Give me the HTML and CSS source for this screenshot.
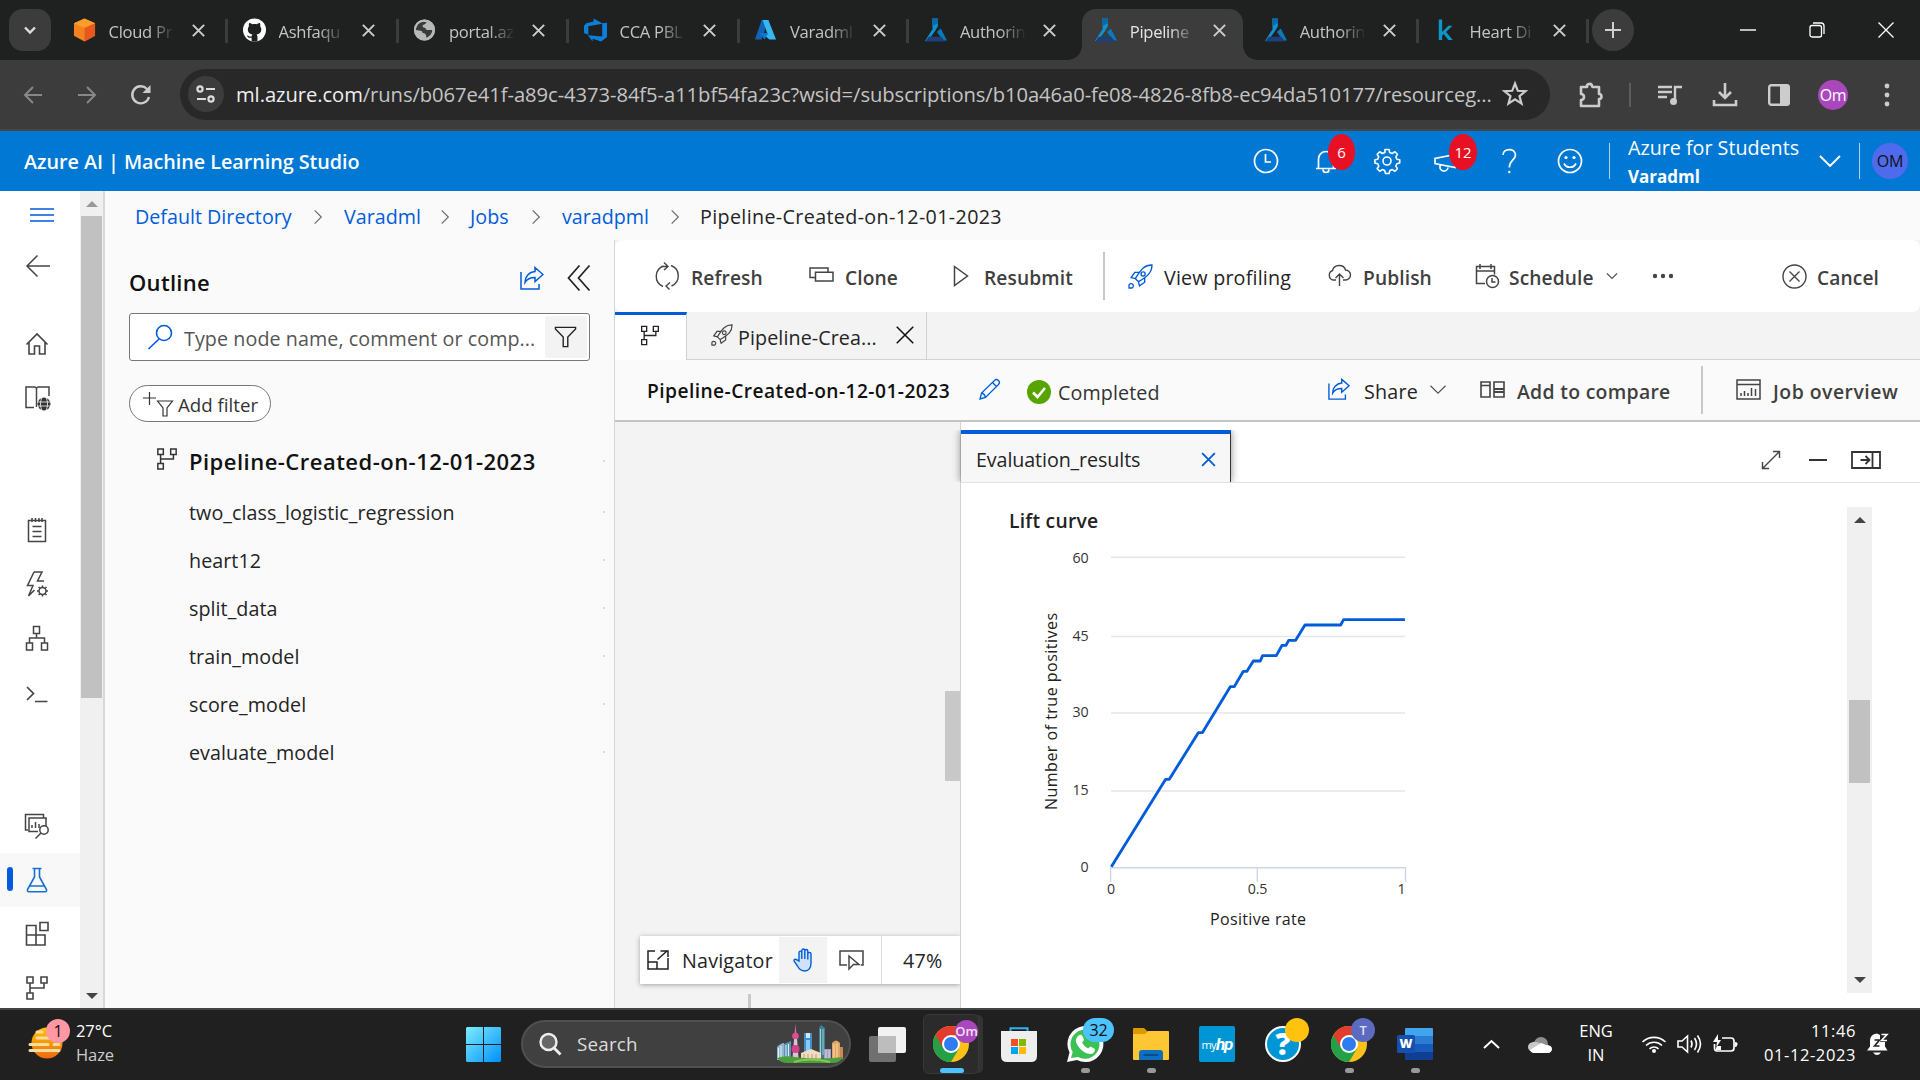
FILE: index.html
```html
<!DOCTYPE html>
<html lang="en">
<head>
<meta charset="utf-8">
<title>Pipeline-Created-on-12-01-2023 - Azure AI | Machine Learning Studio</title>
<link rel="stylesheet" href="styles.css">
</head>
<body>
<svg class="defs" aria-hidden="true">
  <defs>
    <symbol id="flaskfav" viewBox="0 0 24 24"><path d="M8.500 0h6v8l-3 5-7.500 10.500H1L9 11z" fill="#1191d0"/><path d="M8.500 0h6v5l-6 3z" fill="#0a6aa8"/><path d="M13.500 14l4-3.500L24 23l-4 0z" fill="#0b78bb"/><path d="M5 19h13l4 5H1.500z" fill="#1d3f7a"/></symbol>
    <symbol id="x" viewBox="0 0 24 24"><path d="M3 3l18 18M21 3L3 21" stroke="currentColor" fill="none"/></symbol>
    <symbol id="chevR" viewBox="0 0 12 20"><path d="M2 2l8 8-8 8" stroke="currentColor" fill="none" stroke-width="1.300"/></symbol>
    <symbol id="chevD" viewBox="0 0 24 14"><path d="M2 2l10 10L22 2" stroke="currentColor" fill="none"/></symbol>
    <symbol id="pipe" viewBox="0 0 24 24"><g stroke="currentColor" fill="none" stroke-width="1.600"><path d="M2 1h6v6H2zM16 1h6v6h-6zM2 17h6v6H2zM5 7v10M5 12h14V7"/></g></symbol>
    <symbol id="share" viewBox="0 0 24 24"><g stroke="currentColor" fill="none" stroke-width="1.500"><path d="M1 6v17h18v-5M15 1.500l8 7-8 7v-4c-5 0-8 1.500-10 5 0-6 4-10.500 10-11z"/></g></symbol>
    <symbol id="funnel" viewBox="0 0 24 24"><path d="M1 1.500h22v1.800L14.500 12v10.500h-5V12L1 3.300z" stroke="currentColor" fill="none" stroke-width="1.500"/></symbol>
    <symbol id="rocket" viewBox="0 0 24 24"><g stroke="currentColor" fill="none" stroke-width="1.300"><path d="M23 1c-7 0-10 3-16 13l3 3C19 12 23 8 23 1zM10.500 8H6.500l-3.500 5 4 1M16 13.500V17.500l-5 3.500-1-4"/><circle cx="14.500" cy="9.500" r="2"/><path d="M1 23v-3a2.200 2.200 0 1 1 3 3z"/></g></symbol>
    <symbol id="chrome" viewBox="0 0 36 36"><circle cx="18" cy="18" r="18" fill="#fbc116"/><path d="M2.400 9A18 18 0 0 0 18 36l8-13.500-8 3.500z" fill="#24a148"/><path d="M2.400 9l8 13.500L18 18z" fill="#24a148"/><path d="M18 9h15.600A18 18 0 0 0 2.400 9l7.600 13z" fill="#e33b2e"/><circle cx="18" cy="18" r="9" fill="#fff"/><circle cx="18" cy="18" r="7" fill="#2f7cf0"/></symbol>
  </defs>
</svg>

<header class="tabstrip">
  <div class="tabmenu"><svg width="12" height="9" viewBox="0 0 12 9"><path d="M1 1.500l5 5 5-5" stroke="#ddd" stroke-width="2.400" fill="none"/></svg></div>
  <nav class="tabs">
    <div class="tab"><svg class="fav" viewBox="0 0 24 24"><path d="M12 0l11 5v13l-11 6L1 18V5z" fill="#f58220"/><path d="M12 0l11 5-11 5L1 5z" fill="#fe9d2c"/><path d="M12 10l11-5v13l-11 6z" fill="#e8571b"/></svg><span>Cloud Pr</span><svg class="tx"><use href="#x"/></svg></div>
    <div class="tab"><svg class="fav" viewBox="0 0 24 24"><circle cx="12" cy="12" r="12" fill="#fff"/><path d="M9 24v-4c-3 .7-4-.5-5-2.200 1.800-.3 2 1.700 5 .9.100-1 .5-1.500 1-1.900-3-.4-5-2-5-5.300 0-1.300.4-2.500 1.200-3.400-.3-1-.2-2.200.2-3.300 1.300 0 2.500.7 3.400 1.300 1.500-.4 3-.4 4.500 0C15.200 5.500 16.500 4.800 17.700 4.800c.4 1.100.5 2.300.2 3.300.8.900 1.200 2.100 1.200 3.400 0 3.300-2 4.900-5 5.300.7.500 1 1.300 1 2.500V24z" fill="#1f2120"/></svg><span>Ashfaqu</span><svg class="tx"><use href="#x"/></svg></div>
    <div class="tab"><svg class="fav" viewBox="0 0 24 24"><circle cx="12" cy="12" r="11" fill="#b8b8b8"/><path d="M5 6c3-3 6-3 9-2-1 3-4 2-4 4s4 1 4 4h6c0 4-3 7-6 8 0-3-1-5-4-5 0-3-4-2-7-3 0-2 1-4 2-6z" fill="#3a3a3a"/><circle cx="12" cy="12" r="10" fill="none" stroke="#b8b8b8" stroke-width="2"/></svg><span>portal.az</span><svg class="tx"><use href="#x"/></svg></div>
    <div class="tab"><svg class="fav" viewBox="0 0 24 24"><path d="M24 4.500v14.700L18 24l-9-3v3l-5-6.500 15 1.200V5.500L4.500 8v9L0 15V7.500L2.500 5 10 3V0l9 5z" fill="#0a7fdc"/></svg><span>CCA PBL</span><svg class="tx"><use href="#x"/></svg></div>
    <div class="tab"><svg class="fav" viewBox="0 0 24 24"><path d="M8 1.500h7L8 22H1z" fill="#1263b8"/><path d="M9 1.500h6L23 22h-7L9 16h5z" fill="#35b8f1"/><path d="M6 15h9l-4 7z" fill="#0b78d4"/></svg><span>Varadml</span><svg class="tx"><use href="#x"/></svg></div>
    <div class="tab nosep"><svg class="fav"><use href="#flaskfav"/></svg><span>Authorin</span><svg class="tx"><use href="#x"/></svg></div>
    <div class="tab active"><svg class="fav"><use href="#flaskfav"/></svg><span>Pipeline</span><svg class="tx"><use href="#x"/></svg></div>
    <div class="tab"><svg class="fav"><use href="#flaskfav"/></svg><span>Authorin</span><svg class="tx"><use href="#x"/></svg></div>
    <div class="tab"><svg class="fav" viewBox="0 0 24 24"><path d="M5 1h3.500v13l6.500-6.500h4.300L12.600 14l7 8.500h-4.500L10 16.300 8.500 17.800v4.700H5z" fill="#0f96c8"/></svg><span>Heart Di</span><svg class="tx"><use href="#x"/></svg></div>
  </nav>
  <div class="newtab"><svg width="18" height="18" viewBox="0 0 18 18"><path d="M9 1v16M1 9h16" stroke="#d0d0d0" stroke-width="2"/></svg></div>
  <div class="winctl">
    <svg width="16" height="16" viewBox="0 0 16 16"><path d="M0 8h16" stroke="#fff" stroke-width="1.400"/></svg>
    <svg width="16" height="16" viewBox="0 0 16 16"><g fill="none" stroke="#fff" stroke-width="1.300"><rect x="1" y="3.500" width="11.500" height="11.500" rx="2"/><path d="M4 1h8q3 0 3 3v8"/></g></svg>
    <svg width="16" height="16" viewBox="0 0 16 16"><path d="M.5.5l15 15M15.500.5l-15 15" stroke="#fff" stroke-width="1.300"/></svg>
  </div>
</header>

<div class="urlbar">
  <svg class="c" width="20" height="20" viewBox="0 0 20 20"><path d="M19 10H2M10 2l-8 8 8 8" fill="none" stroke="#888" stroke-width="2"/></svg>
  <svg class="c" width="20" height="20" viewBox="0 0 20 20"><path d="M1 10h17M10 2l8 8-8 8" fill="none" stroke="#888" stroke-width="2"/></svg>
  <svg class="c" width="22" height="22" viewBox="0 0 22 22"><path d="M19 13a8.500 8.500 0 1 1-2-8l2 2" fill="none" stroke="#ccc" stroke-width="2.400"/><path d="M20.500 1v8h-8z" fill="#ccc"/></svg>
  <div class="omni">
    <div class="site"><svg width="20" height="18" viewBox="0 0 20 18"><g fill="none" stroke="#ddd" stroke-width="2.200"><circle cx="4" cy="4" r="2.600"/><circle cx="15" cy="14" r="2.600"/><path d="M10 4h9M1 14h9"/></g></svg></div>
    <span class="url"><b>ml.azure.com</b>/runs/b067e41f-a89c-4373-84f5-a11bf54fa23c?wsid=/subscriptions/b10a46a0-fe08-4826-8fb8-ec94da510177/resourceg...</span>
    <svg width="26" height="26" viewBox="0 0 26 26"><path d="M13 2.500l2.800 7.300 7.700.4-6 4.900 2 7.500L13 18.400l-6.500 4.200 2-7.500-6-4.900 7.700-.4z" fill="none" stroke="#ccc" stroke-width="2.200"/></svg>
  </div>
  <svg class="c" width="28" height="28" viewBox="0 0 28 28"><path d="M4 6h6a2.500 2.500 0 0 1 5-1l.5 1H22v7a2.500 2.500 0 0 1 0 5v7H4v-6c4 0 4-6 0-6z" fill="none" stroke="#ccc" stroke-width="2.600" stroke-linejoin="round"/></svg>
  <i class="usep"></i>
  <svg class="c" width="24" height="24" viewBox="0 0 24 24"><path d="M0 4h14M0 9h14M0 14h9M17 19V4h7" fill="none" stroke="#ccc" stroke-width="2.400"/><circle cx="15.500" cy="18.500" r="3.500" fill="#ccc"/></svg>
  <svg class="c" width="26" height="26" viewBox="0 0 26 26"><path d="M13 1v14M7 10l6 6 6-6M2 18v5h22v-5" fill="none" stroke="#ccc" stroke-width="2.600"/></svg>
  <svg class="c" width="24" height="24" viewBox="0 0 24 24"><rect x="2.200" y="2.200" width="19.600" height="19.600" rx="2" fill="none" stroke="#ccc" stroke-width="2.400"/><path d="M13 2h9v20h-9z" fill="#ccc"/></svg>
  <div class="c av">Om</div>
  <svg class="c" width="6" height="26" viewBox="0 0 6 26"><g fill="#ccc"><circle cx="3" cy="4" r="2.400"/><circle cx="3" cy="13" r="2.400"/><circle cx="3" cy="22" r="2.400"/></g></svg>
</div>

<header class="azure">
  <span class="brand">Azure AI | Machine Learning Studio</span>
  <svg class="c" width="26" height="26" viewBox="0 0 26 26"><g fill="none" stroke="#fff" stroke-width="1.700"><circle cx="13" cy="13" r="11.500"/><path d="M12.500 6v8H18"/></g></svg>
  <div class="c note"><svg width="24" height="26" viewBox="0 0 24 26"><path d="M2 20.500h20M4.500 20V11a7.500 7.500 0 0 1 15 0v9M9 21.500a3 3 0 0 0 6 0" fill="none" stroke="#fff" stroke-width="1.700"/></svg><em>6</em></div>
  <svg class="c" width="28" height="28" viewBox="-14 -14 28 28"><g fill="none" stroke="#fff" stroke-width="1.600"><circle r="4"/><path d="M-2-11.500h4l.7 3 2.500 1 2.700-1.700 2.500 2.500-1.500 2.600 1 2.300 2.800.6v3.200l-2.900.8-1 2.300 1.600 2.600-2.500 2.500-2.600-1.600-2.400 1-.8 2.900h-3.600l-.8-2.900-2.400-1-2.600 1.600-2.500-2.500 1.600-2.600-1-2.300-2.900-.8v-3.200l2.800-.6 1-2.300-1.500-2.600 2.500-2.500 2.700 1.700 2.500-1z" stroke-linejoin="round"/></g></svg>
  <div class="c note horn"><svg width="28" height="24" viewBox="0 0 28 24"><path d="M2 9.500v5l20 4V5.500zM7 16v1.500a4 4 0 0 0 8 1" fill="none" stroke="#fff" stroke-width="1.700"/></svg><em>12</em></div>
  <svg class="c" width="18" height="26" viewBox="0 0 18 26"><path d="M3 7c0-7 12.500-7.500 12.500 0C15.500 12 9.300 12 9.300 19.500" fill="none" stroke="#fff" stroke-width="1.700"/><circle cx="9.300" cy="24" r="1.200" fill="#fff"/></svg>
  <svg class="c" width="26" height="26" viewBox="0 0 26 26"><g fill="none" stroke="#fff" stroke-width="1.700"><circle cx="13" cy="13" r="11.500"/><path d="M7 15.500c2.500 5 9.500 5 12 0"/></g><circle cx="9" cy="9.500" r="1.600" fill="#fff"/><circle cx="17" cy="9.500" r="1.600" fill="#fff"/></svg>
  <i class="hsep"></i>
  <div class="sub"><span>Azure for Students</span><strong>Varadml</strong></div>
  <svg class="c thick" width="24" height="14"><use href="#chevD"/></svg>
  <i class="hsep end"></i>
  <div class="c om">OM</div>
</header>

<main class="app">
  <nav class="side">
    <div class="ic menu"><svg width="24" height="14" viewBox="0 0 24 14"><path d="M0 1h24M0 7h24M0 13h24" stroke="#015cda" stroke-width="1.300"/></svg></div>
    <div class="ic back"><svg width="25" height="24" viewBox="0 0 25 24"><path d="M25 12H2M12.500 1.500L2 12l10.500 10.500" fill="none" stroke="#444" stroke-width="1.500"/></svg></div>
    <div class="ic home"><svg width="24" height="24" viewBox="0 0 24 24"><path d="M1.500 12.500L12 2l10.500 10.500M4 10.500V22h5.500v-8h5v8H20V10.500" fill="none" stroke="#444" stroke-width="1.600"/></svg></div>
    <div class="ic"><svg width="27" height="26" viewBox="0 0 27 26"><path d="M10 22.500H2V2h9l1.500 1L14 2h11v9M12.500 3v19" fill="none" stroke="#444" stroke-width="1.500"/><circle cx="20" cy="19" r="6.500" fill="#333"/><path d="M13 17h14M13 21h14M18 12.500c-2 4-2 9 0 13M22 12.500c2 4 2 9 0 13" stroke="#fff" fill="none" stroke-width=".8"/></svg></div>
    <div class="ic gapa"><svg width="20" height="26" viewBox="0 0 20 26"><path d="M1.500 3.500h17v21h-17zM5 1v4M8.500 1v4M12 1v4M15 1v4M5.500 9.500h9M5.500 14.500h9M5.500 19.500h9" fill="none" stroke="#444" stroke-width="1.500"/></svg></div>
    <div class="ic"><svg width="24" height="28" viewBox="0 0 24 28"><g fill="none" stroke="#444" stroke-width="1.500"><path d="M9 2h8l-4.500 9H19M9 2L2.500 15.500H8L3.500 26l6-6"/><circle cx="17.500" cy="21" r="3.500"/><path d="M17.500 15.500v2M17.500 24.500v2M12 21h2M21 21h2M13.600 17l1.500 1.500M20 23.500l1.500 1.500M13.600 25l1.500-1.500M20 18.500l1.500-1.500"/></g></svg></div>
    <div class="ic"><svg width="24" height="26" viewBox="0 0 24 26"><path d="M8.500 1.500h6v7h-6zM1.500 18h6v7h-6zM16.500 18h6v7h-6zM11.500 8.500V13M4.500 18v-5h15v5" fill="none" stroke="#444" stroke-width="1.500"/></svg></div>
    <div class="ic low"><svg width="22" height="18" viewBox="0 0 22 18"><path d="M1 1l6.500 6.500L1 14M9 15.500h12.500" fill="none" stroke="#444" stroke-width="1.700"/></svg></div>
    <div class="ic gapb"><svg width="26" height="26" viewBox="0 0 26 26"><g fill="none" stroke="#444" stroke-width="1.500"><path d="M4 17H1.500V1.500h18V5M14 18.500H5V5h17v8M8 15v-3M11.500 15V9M15 15v-4"/><circle cx="20" cy="17" r="4.200"/><path d="M17 20l-5.500 5.500"/></g></svg></div>
    <div class="ic sel"><svg width="22" height="26" viewBox="0 0 22 26"><path d="M6.500 1.500h9M8.500 2v8L1.500 22.500q-.5 2 1.500 2.300h16q2-.3 1.500-2.300L13.500 10V2M4 19h14" fill="none" stroke="#1570d0" stroke-width="1.600"/></svg></div>
    <div class="ic"><svg width="24" height="26" viewBox="0 0 24 26"><path d="M1.500 4.500H11V24H1.500zM1.500 14H20v10H1.500M15 1.500h8v8h-8z" fill="none" stroke="#444" stroke-width="1.600"/></svg></div>
    <div class="ic"><svg width="24" height="26"><use href="#pipe" color="#444"/></svg></div>
  </nav>
  <div class="sbar left"><i class="up"></i><i class="thumb"></i><i class="down"></i></div>

  <div class="work">
    <nav class="crumbs">
      <a>Default Directory</a><svg><use href="#chevR"/></svg><a>Varadml</a><svg><use href="#chevR"/></svg><a>Jobs</a><svg><use href="#chevR"/></svg><a>varadpml</a><svg><use href="#chevR"/></svg><span>Pipeline-Created-on-12-01-2023</span>
    </nav>
    <div class="cols">
      <aside class="outline">
        <div class="ohead"><h2>Outline</h2><svg class="blue" width="24" height="24"><use href="#share"/></svg><svg width="24" height="28" viewBox="0 0 24 28"><path d="M12.500 1.500L1.500 14l11 12.500M22.500 1.500L11.500 14l11 12.500" fill="none" stroke="#222" stroke-width="1.700"/></svg></div>
        <div class="search"><svg class="blue" width="26" height="26" viewBox="0 0 26 26"><circle cx="17" cy="9" r="7.500" fill="none" stroke="currentColor" stroke-width="1.600"/><path d="M12 15L1.500 25" stroke="currentColor" stroke-width="1.600"/></svg><span>Type node name, comment or comp...</span><div class="fbtn"><svg width="25" height="22"><use href="#funnel"/></svg></div></div>
        <div class="pill"><svg width="32" height="26" viewBox="0 0 32 26"><path d="M1 7h13M7.500 1v13M15.500 10h15l-5.500 7v8h-4v-8z" fill="none" stroke="#333" stroke-width="1.200"/></svg><span>Add filter</span></div>
        <div class="tree">
          <div class="node root"><svg width="22" height="22"><use href="#pipe"/></svg><span>Pipeline-Created-on-12-01-2023</span></div>
          <div class="node"><span>two_class_logistic_regression</span></div>
          <div class="node"><span>heart12</span></div>
          <div class="node"><span>split_data</span></div>
          <div class="node"><span>train_model</span></div>
          <div class="node"><span>score_model</span></div>
          <div class="node"><span>evaluate_model</span></div>
        </div>
      </aside>

      <section class="job">
        <div class="cmd">
          <svg width="26" height="28" viewBox="0 0 26 28"><path d="M17 3.500A11 11 0 0 1 17.500 24M9 24.500A11 11 0 0 1 9.500 4M7.500 4.500h5.500M10 .5l4 4-4 3.500M16 20.500l-4 3.500 3.500 3.500" fill="none" stroke="#444" stroke-width="1.400"/></svg><span>Refresh</span>
          <svg class="clone" width="25" height="15" viewBox="0 0 25 15"><path d="M6 10.500H1V1h18v4M6.500 5.200H24V14H6.500z" fill="none" stroke="#444" stroke-width="1.500"/></svg><span>Clone</span>
          <svg width="16" height="22" viewBox="0 0 16 22"><path d="M1.500 1.500L14.500 11l-13 9.500z" fill="none" stroke="#444" stroke-width="1.500"/></svg><span>Resubmit</span>
          <i></i>
          <svg class="blue in" width="25" height="25"><use href="#rocket"/></svg><span class="reg">View profiling</span>
          <svg class="in" width="25" height="22" viewBox="0 0 25 22"><path d="M9 15H6a5 5 0 0 1-.5-9.500C7-1 17-1 18.500 5a5 5 0 0 1 0 10H16M12.500 21V9M8.500 13l4-4 4 4" fill="none" stroke="#444" stroke-width="1.400"/></svg><span>Publish</span>
          <svg class="in" width="25" height="26" viewBox="0 0 25 26"><g fill="none" stroke="#444" stroke-width="1.500"><path d="M10 20.500H1.500v-17h18v8M1.500 8h18M5 1v5M16 1v5"/><circle cx="17.500" cy="18.500" r="6"/><path d="M17 15v4h3.500"/></g></svg><span>Schedule</span>
          <svg class="tiny in" width="12" height="8"><use href="#chevD"/></svg>
          <svg width="22" height="6" viewBox="0 0 22 6"><g fill="#444"><circle cx="3" cy="3" r="2.200"/><circle cx="11" cy="3" r="2.200"/><circle cx="19" cy="3" r="2.200"/></g></svg>
          <svg class="in" width="25" height="25" viewBox="0 0 25 25"><g fill="none" stroke="#444" stroke-width="1.400"><circle cx="12.500" cy="12.500" r="11.500"/><path d="M7.500 7.500l10 10M17.500 7.500l-10 10"/></g></svg><span>Cancel</span>
        </div>
        <div class="jtabs">
          <div class="jt on"><svg width="20" height="21"><use href="#pipe"/></svg></div>
          <div class="jt two"><svg width="22" height="22"><use href="#rocket"/></svg><span>Pipeline-Crea...</span><svg class="cx" width="22" height="22"><use href="#x"/></svg></div>
        </div>
        <div class="jtitle">
          <strong>Pipeline-Created-on-12-01-2023</strong>
          <svg class="blue" width="22" height="22" viewBox="0 0 22 22"><path d="M1 21l1.500-6L15.500 2.500q2-2 4 0t0 4L6.500 19.500zM13.500 4.500l4 4M2.500 15q3 .5 4 4.500" fill="none" stroke="currentColor" stroke-width="1.300"/></svg>
          <svg class="tick" width="24" height="24" viewBox="0 0 24 24"><circle cx="12" cy="12" r="12" fill="#57a300"/><path d="M6 12.500l4.500 4.500L18 8" fill="none" stroke="#fff" stroke-width="2.600"/></svg>
          <span class="done">Completed</span>
          <svg class="blue" width="24" height="22"><use href="#share"/></svg><span class="reg">Share</span>
          <svg class="sm" width="18" height="11"><use href="#chevD"/></svg>
          <svg width="25" height="17" viewBox="0 0 25 17"><g fill="none" stroke="#444" stroke-width="1.600"><path d="M1 1h9v15H1zM1 4.500h9M14 1h10v15H14z"/><path d="M14 8h10M14 11h10" stroke-width="2"/></g></svg><span>Add to compare</span>
          <i></i>
          <svg width="25" height="21" viewBox="0 0 25 21"><path d="M1 1h23v19H1zM1 5.500h23M5 17v-3M8.500 17v-5M12 17v-3M15.500 17V9M19.500 17v-7" fill="none" stroke="#444" stroke-width="1.500"/></svg><span class="wide">Job overview</span>
        </div>
        <div class="stage">
          <div class="canvas">
            <i class="grip"></i>
            <div class="navi">
              <svg width="22" height="20" viewBox="0 0 22 20"><path d="M8 1H1v18h20V8M1 12h9v7M10.500 9.500L20 1M13.500 1H21v6" fill="none" stroke="#222" stroke-width="1.500"/></svg><span>Navigator</span>
              <div class="hand"><svg class="blue" width="20" height="24" viewBox="0 0 20 24"><path d="M6 13V4.500a1.400 1.400 0 0 1 2.800 0V11V2.500a1.500 1.500 0 0 1 3 0V11V3a1.500 1.500 0 0 1 3 0v8.500V6a1.500 1.500 0 0 1 3.200 0v9c0 5-2.500 8-6 8-4 0-6-2-7.500-5L1 13c-.5-1.500 1.500-2.500 3-1z" fill="#cfe2fa" stroke="currentColor" stroke-width="1.400"/></svg></div>
              <svg width="25" height="21" viewBox="0 0 25 21"><path d="M8 15H1V1h23v14h-2M10 6v13l4.500-4.500H20z" fill="none" stroke="#444" stroke-width="1.500"/></svg>
              <b></b><span>47%</span>
            </div>
            <i class="stub"></i>
          </div>
          <div class="results">
            <div class="rhead">
              <div class="rtab"><span>Evaluation_results</span><svg class="blue" width="17" height="17"><use href="#x"/></svg></div>
              <div class="rtools">
                <svg width="20" height="20" viewBox="0 0 20 20"><path d="M1.500 18.500l17-17M12 1.500h6.500V8M1.500 12v6.500H8" fill="none" stroke="#444" stroke-width="1.400"/></svg>
                <svg width="18" height="4" viewBox="0 0 18 4"><path d="M0 2h18" stroke="#333" stroke-width="2"/></svg>
                <svg width="30" height="18" viewBox="0 0 30 18"><path d="M1 1h28v16H1zM21.500 1v16M9.500 9h9M14.500 5l4 4-4 4" fill="none" stroke="#333" stroke-width="1.800"/></svg>
              </div>
            </div>
            <div class="rbody">
              <svg class="chart" width="520" height="486" viewBox="940 507 520 486">
                <text x="1009" y="528" class="ct" textLength="89">Lift curve</text>
                <g stroke="#e6e6e6" stroke-width="1.500"><path d="M1111 557.300h294M1111 636.600h294M1111 713h294M1111 791h294"/></g>
                <path d="M1110.600 882v-14.300H1405.500V882M1257.300 868v14" fill="none" stroke="#ccd6eb" stroke-width="1.400"/>
                <polyline transform="translate(940 490) scale(.3333)" points="514,1130 677,868 688,868 775,728 787,728 871,590 883,590 910,544 921,544 940,513 961,513 968,497 1009,497 1026,466 1038,466 1046,451 1067,451 1095,405 1202,405 1211,389 1395,389" fill="none" stroke="#015cda" stroke-width="8.500" stroke-linejoin="round"/>
                <g class="ax" text-anchor="end"><text x="1088.500" y="563">60</text><text x="1088.500" y="641">45</text><text x="1088.500" y="717">30</text><text x="1088.500" y="795">15</text><text x="1088.500" y="872">0</text></g>
                <g class="ax" text-anchor="middle"><text x="1111" y="894">0</text><text x="1257.500" y="894">0.5</text><text x="1401.500" y="894">1</text></g>
                <text class="tt" x="1258" y="925" text-anchor="middle" textLength="96">Positive rate</text>
                <text class="tt" transform="translate(1056.500 711.500) rotate(-90)" text-anchor="middle" textLength="197">Number of true positives</text>
              </svg>
              <div class="sbar right"><i class="up"></i><i class="thumb"></i><i class="down"></i></div>
            </div>
          </div>
        </div>
      </section>
    </div>
  </div>
</main>

<footer class="task">
  <div class="wx"><svg width="36" height="38" viewBox="0 0 36 38"><defs><linearGradient id="sun" x2="0" y2="1"><stop offset="0" stop-color="#fdc400"/><stop offset="1" stop-color="#ee6a10"/></linearGradient></defs><circle cx="18" cy="20" r="15.500" fill="url(#sun)"/><path d="M8 9h5M8 15h26M1 21.500h18M25 21.500h5M1 27.500h29" stroke="#f5dca0" stroke-width="3" stroke-linecap="round"/></svg><em>1</em></div>
  <div class="wt"><span>27°C</span><span class="dim">Haze</span></div>
  <svg class="m" width="35" height="35" viewBox="0 0 35 35"><defs><linearGradient id="w" x2="1" y2="1"><stop offset="0" stop-color="#7cecff"/><stop offset="1" stop-color="#0090fb"/></linearGradient></defs><path d="M1 0h16v17H0V1zM18 0h16l1 1v16H18zM0 18h17v17H1l-1-1zM18 18h17v16l-1 1H18z" fill="url(#w)"/></svg>
  <div class="find">
    <svg width="23" height="24" viewBox="0 0 23 24"><circle cx="9.500" cy="10" r="8" fill="#666" stroke="#eee" stroke-width="2.400"/><path d="M15 16l6.500 6.500" stroke="#eee" stroke-width="2.800"/></svg><span>Search</span>
    <svg width="68" height="40" viewBox="0 0 68 40"><path d="M1 23q4-4 7-4v17H1z" fill="#8fb7cd"/><path d="M8 20l7-3v19H8z" fill="#5c93b4"/><path d="M2.500 24v12M5 22v14M10 21v14M12.500 20v15" stroke="#e4f0f6" stroke-width="1"/><path d="M19.500 0l1 10h-2z" fill="#e06a9d"/><path d="M18.500 10h2.200l1.800 24h-6z" fill="#d8c3d8"/><circle cx="19.500" cy="12" r="3.300" fill="#e04b93"/><circle cx="19.500" cy="25" r="4" fill="#d0428a"/><path d="M28 9h8v24h-8z" fill="#3f8fd0"/><path d="M30 9h4v5h-4z" fill="#cfe9fb"/><path d="M30 16h4v14h-4z" fill="#8cc8f0"/><path d="M43 4l2-3 4 3v30h-6z" fill="#3d7f93"/><path d="M44.500 5v26M47 5v26" stroke="#9fd0d6" stroke-width="1"/><path d="M25 29l10-4 10 4v7H25z" fill="#f0dcc0"/><path d="M28 30v5M32 30v5M36 30v5M40 30v5" stroke="#c9a780" stroke-width="1.200"/><path d="M48 25h7v10h-7z" fill="#a79cc0"/><path d="M50 26v8M53 26v8" stroke="#dcd6ea"/><path d="M56 19q4-5 8 0v16h-8z" fill="#e0a564"/><path d="M64 23h3v12h-3z" fill="#c98a4e"/><path d="M58 20v14M61 19v15" stroke="#f9dfae"/><path d="M1 34q8-3 18-1 22 3 48 0-3 6-10 6H12Q4 39 1 34z" fill="#4f9e3d"/><path d="M18 38q16-5 36 0" stroke="#85cb4f" stroke-width="2" fill="none"/></svg>
  </div>
  <svg class="m" width="37" height="37" viewBox="0 0 37 37"><rect x="0" y="10" width="27" height="26" rx="2" fill="#707070"/><rect x="9" y="1" width="28" height="26" rx="2" fill="#f2f2f2"/><path d="M9 10h18v17H9z" fill="#bdbdbd"/></svg>
  <div class="ti big cur"><svg width="36" height="36"><use href="#chrome"/></svg><em class="om2">Om</em></div>
  <div class="ti"><svg width="36" height="36" viewBox="0 0 36 36"><path d="M9.500 8V2.200h17V8" fill="none" stroke="#2fb4ec" stroke-width="2"/><path d="M0 5h36v25q0 6-6 6H6q-6 0-6-6z" fill="#eee"/><path d="M10 13h7v7h-7z" fill="#f25022"/><path d="M18 13h7v7h-7z" fill="#7fba00"/><path d="M10 21h7v7h-7z" fill="#00a4ef"/><path d="M18 21h7v7h-7z" fill="#ffb900"/></svg></div>
  <div class="ti run"><svg width="36" height="36" viewBox="0 0 36 36"><path d="M0 36l2.500-9.500A18 18 0 1 1 10 34z" fill="#fff"/><path d="M4 32l1.700-6A14.500 14.500 0 1 1 11 31z" fill="#3cc254"/><path d="M11 10q3-3 5 1l1 3-2 2.500q2 4 6 6l2.500-2 4.500 2.500q0 5-5 5-6-.5-10.500-6T9 13z" fill="#fff"/></svg><em class="b32">32</em></div>
  <div class="ti run"><svg width="36" height="36" viewBox="0 0 36 36"><path d="M0 8V3q0-1 1-1h10l4 4v8H0z" fill="#dc9a00"/><path d="M0 8h12l3-3h20q1 0 1 1v27q0 1-1 1H1q-1 0-1-1z" fill="#fcc733"/><path d="M6 34V27q0-3 3-3h18q3 0 3 3v7z" fill="#0f6fbf"/><path d="M10.500 29h15" stroke="#0a4c8a" stroke-width="2"/></svg></div>
  <div class="ti"><div class="hp"><small>my</small><b>hp</b></div></div>
  <div class="ti"><div class="help">?</div><em class="dot"></em></div>
  <div class="ti run"><svg width="36" height="36"><use href="#chrome"/></svg><em class="tb">T</em></div>
  <div class="ti run"><svg width="36" height="36" viewBox="0 0 36 36"><path d="M9 2h26q1 0 1 1v7H8V3q0-1 1-1z" fill="#41a5ee"/><path d="M8 10h28v8H8z" fill="#2b7cd3"/><path d="M8 18h28v8H8z" fill="#185abd"/><path d="M8 26h28v7q0 1-1 1H9q-1 0-1-1z" fill="#103f91"/><rect x="0" y="9" width="18" height="18" rx="1.500" fill="#174fb0"/></svg><b class="word">W</b></div>
  <svg class="m" width="17" height="10" viewBox="0 0 17 10"><path d="M1 9l7.500-7L16 9" fill="none" stroke="#fff" stroke-width="2"/></svg>
  <svg class="m" width="24" height="17" viewBox="0 0 24 17"><circle cx="13" cy="8" r="7" fill="#8f8f8f"/><path d="M5 16q-5-1-5-5t5-5q5-1 9 3l8 2q3 4-1 6H5z" fill="#c8c8c8"/><path d="M2 14l11-7q3 1 5 2 6 0 6 4 0 3-4 4H5q-2 0-3-3z" fill="#fff"/></svg>
  <div class="lang"><span>ENG</span><span>IN</span></div>
  <svg class="m" width="26" height="18" viewBox="0 0 26 18"><path d="M1.500 7a16.500 16.500 0 0 1 23 0M5 10.500a11.500 11.500 0 0 1 16 0M8.500 13.800a6.500 6.500 0 0 1 9 0" fill="none" stroke="#fff" stroke-width="1.600"/><circle cx="13" cy="16" r="2" fill="#fff"/></svg>
  <svg class="m" width="25" height="20" viewBox="0 0 25 20"><path d="M1 7h4l5.500-5v16L5 13H1zM14 6.500q2 3.500 0 7M17.500 4q4 6 0 12M20.500 1.500q6 8.500 0 17" fill="none" stroke="#fff" stroke-width="1.600"/></svg>
  <svg class="m" width="25" height="20" viewBox="0 0 25 20"><path d="M9 4h9q3 0 3 3v7q0 3-3 3H4q-2.500 0-2.500-3v-4" fill="none" stroke="#fff" stroke-width="1.700"/><path d="M22 8q3 0 2.500 2.500T22 13zM5 0L0 8h4l-1 6 5-8H5zM3 12h5v4H3z" fill="#fff"/></svg>
  <div class="time"><span>11:46</span><span>01-12-2023</span></div>
  <svg class="m" width="22" height="24" viewBox="0 0 22 24"><path d="M0 18.500l3-4V9Q3 2 10 1.500l8 4v9l2.500 4zM6 20.500h8q-4 5-8 0z" fill="#fff"/><path d="M7.500 8h5l-5 6h5" fill="none" stroke="#222" stroke-width="1.600"/><path d="M13 1h9v9h-9z" fill="#222"/><path d="M14.500 2.500H20l-5.500 6H20" fill="none" stroke="#fff" stroke-width="1.600"/></svg>
</footer>
</body>
</html>
```
FILE: styles.css
```css
* { box-sizing: border-box; }
html, body { margin: 0; height: 100%; overflow: hidden; }
body { width: 1920px; height: 1080px; display: flex; flex-direction: column; font-family: "Open Sans", "Noto Sans", sans-serif; font-size: 19.700px; letter-spacing: -.1px; color: #242424; background: #fff; white-space: nowrap; }
svg { display: block; flex: none; overflow: visible; }
i, em { font-style: normal; display: block; }
.defs { width: 0; height: 0; position: absolute; }
.blue { color: #015cda; }
.sm { color: #555; stroke-width: 1.600; }
.tiny { color: #555; stroke-width: 2.400; }
.thick { color: #fff; stroke-width: 1.900; }

/* browser tabs */
.tabstrip { height: 60px; flex: none; background: #1f2120; display: grid; grid-template-columns: 49px 1531px 40px 1fr; padding-left: 9px; align-items: center; }
.tabmenu { width: 42px; height: 42px; border-radius: 14px; background: #3c3c3c; display: grid; place-items: center; }
.tabs { display: grid; grid-template-columns: 170px repeat(3, 170.500px) repeat(5, 169.900px); height: 60px; }
.tab { display: grid; grid-template-columns: 24px 66px 16px; column-gap: 12px; padding-left: 14.500px; align-items: center; color: #c4c4c4; font-size: 16.600px; letter-spacing: -.3px; position: relative; }
.tab .fav { width: 23px; height: 24px; }
.tab span { padding-top: 3px; -webkit-mask-image: linear-gradient(90deg, #000 60%, transparent); mask-image: linear-gradient(90deg, #000 60%, transparent); }
.tab .tx { width: 15px; height: 15px; margin-left: 4px; stroke-width: 3.200; color: #ccc; }
.tab::after { content: ""; position: absolute; right: 0; top: 19px; width: 3px; height: 24px; background: #3c3c3c; }
.tab.nosep::after { display: none; }
.tab.active { color: #e4e4e4; }
.tab.active::before { content: ""; position: absolute; left: 3px; top: 9px; width: 161px; height: 51px; background: #3c3c3c; border-radius: 14px 14px 0 0; }
.tab.active::after { left: -11px; right: auto; top: 46px; width: 189px; height: 14px; background: radial-gradient(circle at 0 0, transparent 13.500px, #3c3c3c 14px) left / 14px 14px no-repeat, radial-gradient(circle at 100% 0, transparent 13.500px, #3c3c3c 14px) right / 14px 14px no-repeat; }
.tab.active > * { position: relative; }
.newtab { margin-left: 3px; width: 42px; height: 42px; border-radius: 50%; background: #3c3c3c; display: grid; place-items: center; }
.winctl { display: flex; gap: 53px; padding-left: 111px; }

/* address bar */
.urlbar { height: 71px; flex: none; background: #3c3c3c; border-bottom: 2px solid #474747; display: grid; align-items: center; padding-left: 6px; grid-template-columns: 54px 54px 54px 12px 1370px 14px 54px 24px 56px 54px 54px 54px 54px; }
.urlbar .c, .azure .c { justify-self: center; }
.omni { grid-column: 5; height: 51px; margin-top: -1px; border-radius: 26px; background: #282828; display: grid; grid-template-columns: 48px 1266px 26px; align-items: center; padding-left: 8px; }
.omni + svg { grid-column: 7; }
.site { width: 36px; height: 36px; border-radius: 50%; background: #3c3c3c; display: grid; place-items: center; }
.url { color: #c4c4c4; font-size: 20.200px; letter-spacing: -.065px; }
.url b { font-weight: 400; color: #eee; }
.usep { width: 2px; height: 24px; background: #5c5c5c; justify-self: center; }
.av { width: 30px; height: 30px; border-radius: 50%; background: #ab47bc; color: #fff; font-size: 16px; display: grid; place-items: center; letter-spacing: -.5px; }

/* portal header */
.azure { height: 60px; flex: none; background: #0078d4; color: #fff; display: grid; align-items: center; padding-left: 24px; grid-template-columns: 1212px 60px 60px 62px 58px 66px 56px 30px 180px 44px 18px 40px; }
.brand { font-weight: 600; font-size: 19.800px; letter-spacing: -.050px; padding-top: 1px; }
.note { position: relative; }
.note em { position: absolute; left: 14px; top: -14px; width: 27px; height: 36px; border-radius: 50%; background: #e81123; font-size: 15px; line-height: 36px; text-align: center; }
.horn em { left: 16px; top: -15px; width: 28px; }
.hsep { width: 1px; height: 36px; background: #ffffffb0; margin-left: 11px; }
.hsep.end { margin-left: 7px; }
.sub { display: grid; grid-template-rows: 29px 29px; line-height: 31px; letter-spacing: 0; }
.sub strong { font-size: 17px; font-weight: 700; }
.om { width: 36px; height: 36px; border-radius: 50%; background: #4f6bed; color: #111; font-size: 16px; display: grid; place-items: center; }

/* app shell */
.app { flex: 1; min-height: 0; display: flex; }
.side { width: 80px; display: flex; flex-direction: column; background: #fff; overflow: hidden; }
.ic { height: 54px; flex: none; padding-right: 6px; display: grid; place-items: center; }
.menu { height: 48px; padding: 0 0 0 4px; }
.home { margin-top: 24px; }
.gapa { margin-top: 78px; }
.low { padding-top: 5px; }
.gapb { margin-top: 80px; }
.sel { background: #f8f8f8; position: relative; }
.sel::before { content: ""; position: absolute; left: 7px; top: 14px; width: 6px; height: 24px; border-radius: 3px; background: #015cda; }
.sbar { background: #f0f0f0; display: flex; flex-direction: column; align-items: center; }
.left { width: 25px; border-right: 2px solid #d8d8d8; padding: 10px 0 9px 0; }
.sbar .up { border: 6px solid transparent; border-top: 0; border-bottom: 6px solid #999; }
.sbar .down { border: 6px solid transparent; border-bottom: 0; border-top: 6px solid #444; margin-top: auto; }
.left .thumb { width: 21px; height: 482px; background: #c1c1c1; margin-top: 9px; }
.work { flex: 1; display: flex; flex-direction: column; background: #fafafa; min-width: 0; }
.crumbs { height: 49px; flex: none; display: grid; grid-template-columns: 178px 31px 96px 30px 61px 31px 108px 30px 1fr; align-items: center; padding-left: 30px; padding-top: 2px; letter-spacing: 0; }
.crumbs a { color: #015cda; }
.crumbs span { letter-spacing: .36px; }
.crumbs svg { width: 10px; height: 18px; color: #666; }
.cols { flex: 1; display: flex; min-height: 0; }
.outline { width: 510px; border-right: 1px solid #d6d6d6; padding-left: 24px; display: flex; flex-direction: column; }
.ohead { display: grid; grid-template-columns: 391px 47px 24px; align-items: center; height: 73px; padding-top: 5px; }
.ohead svg { margin-top: -2px; }
.ohead h2 { margin: 5px 0 0; font-size: 22px; font-weight: 600; color: #111; letter-spacing: .3px; }
.search { width: 461px; height: 48px; border: 1px solid #777; border-radius: 3px; background: #fff; display: grid; grid-template-columns: 36px 361px 42px; align-items: center; padding-left: 18px; color: #555; letter-spacing: .080px; }
.search svg { margin-left: -1px; }
.search span { padding-top: 2px; }
.fbtn { height: 42px; background: #f3f3f3; color: #222; display: grid; place-items: center; border-radius: 2px; }
.pill { width: 142px; height: 37px; margin-top: 24px; border: 1px solid #777; border-radius: 19px; background: #fff; display: flex; align-items: center; gap: 4px; padding-left: 12px; font-size: 18.700px; color: #333; letter-spacing: 0; }
.pill span { padding-top: 1px; }
.tree { margin-top: 12px; padding-right: 5px; }
.node { height: 48px; display: grid; grid-template-columns: 1fr 6px; align-items: center; padding-left: 60px; letter-spacing: .060px; }
.node::after { content: ""; width: 2px; height: 2px; background: #ddd; }
.root { height: 54px; grid-template-columns: 33px 1fr 6px; padding-left: 27px; font-size: 22px; font-weight: 600; color: #111; letter-spacing: .480px; }
.root svg { margin-top: -4px; color: #333; }

/* job page */
.job { flex: 1; display: flex; flex-direction: column; min-width: 0; background: #f3f3f3; }
.cmd { height: 72px; flex: none; background: #fff; border-radius: 8px; display: grid; align-items: center; padding-left: 39px; color: #3f3f3f; font-weight: 600; font-size: 19.200px; letter-spacing: .1px; grid-template-columns: 37px 118px 36px 108px 31px 119px 24px 37px 162px 37px 111px 35px 96px 47px 129px 36px 1fr; }
.cmd span, .jtitle span { padding-top: 2px; }
.cmd .in { margin-left: 1px; }
.cmd .clone { margin-top: -3px; }
.cmd i, .jtitle i { width: 2px; height: 48px; background: #c8c8c8; }
.cmd .reg, .jtitle .reg { font-weight: 400; color: #242424; font-size: 19.700px; letter-spacing: .2px; }
.jtabs { height: 48px; flex: none; display: flex; border-bottom: 1px solid #d2d2d2; letter-spacing: 0; }
.jt { height: 48px; border-right: 1px solid #d2d2d2; }
.jt.on { width: 72px; background: #fff; border-top: 3px solid #015cda; padding: 10px 0 0 25px; }
.jt.two { width: 240px; height: 47px; display: grid; grid-template-columns: 27px 156px 22px; align-items: center; padding-left: 24px; }
.jt.two svg { color: #444; margin-top: -2px; }
.jt.two .cx { color: #111; stroke-width: 1.700; }
.jt.two span { padding-top: 4px; letter-spacing: .1px; }
.jtitle { height: 62px; flex: none; background: #fafafa; border-bottom: 2px solid #c4c4c4; display: grid; align-items: center; padding-left: 32px; grid-template-columns: 332px 48px 32px 268px 37px 65px 51px 37px 184px 35px 37px 1fr; font-weight: 600; font-size: 19.400px; letter-spacing: .3px; color: #3f3f3f; }
.jtitle > svg { margin-top: -2px; }
.jtitle .tick { margin-top: 3px; }
.jtitle .wide { letter-spacing: .5px; }
.jtitle strong { font-weight: 600; color: #111; font-size: 19.200px; letter-spacing: .44px; padding-top: 1px; }
.jtitle .done { font-weight: 400; color: #333; padding-top: 5px; font-size: 19.700px; letter-spacing: .1px; margin-left: -1px; }
.stage { flex: 1; display: flex; min-height: 0; }
.canvas { width: 346px; border-right: 1px solid #d2d2d2; display: flex; flex-direction: column; }
.grip { width: 15px; height: 90px; background: #c8c8c8; margin: 269px 0 155px auto; }
.navi { height: 48px; margin-left: 25px; background: #fff; box-shadow: 0 1px 5px #0005; clip-path: inset(-8px 0 -8px -8px); display: grid; grid-template-columns: 35px 97px 60px 42px 22px 1fr; align-items: center; padding-left: 7px; letter-spacing: .2px; }
.navi span { padding-top: 1px; }
.hand { width: 48px; height: 46px; background: #f3f3f3; display: grid; place-items: center; }
.navi b { width: 1px; height: 48px; background: #ddd; }
.stub { width: 3px; height: 14px; background: #c8c8c8; margin: 10px 0 0 133px; }
.results { flex: 1; background: #fff; display: flex; flex-direction: column; }
.rhead { height: 61px; flex: none; border-bottom: 1px solid #e1e1e1; padding-top: 8px; display: flex; justify-content: space-between; }
.rtab { width: 270px; height: 52px; background: #f7f7f7; border-top: 4px solid #015cda; border-right: 1px solid #333; box-shadow: 0 0 8px #0007; clip-path: inset(0 -9px 0 -9px); display: flex; align-items: center; justify-content: space-between; padding: 2px 13px 0 15px; }
.rtab svg { stroke-width: 2.600; }
.rtools { display: flex; align-items: center; gap: 28px; padding: 8px 39px 0 0; }
.rtools svg + svg + svg { margin-left: -4px; }
.rbody { flex: 1; display: flex; justify-content: space-between; padding: 24px 48px 15px 0; }
.chart { margin-left: -21px; }
.ct { font-size: 19.300px; font-weight: 600; fill: #222; }
.ax { font-size: 14.200px; fill: #333; }
.tt { font-size: 16px; fill: #222; }
.right { width: 25px; padding: 10px 0; }
.right .up { border-bottom-color: #444; }
.right .thumb { width: 21px; height: 83px; background: #c1c1c1; margin-top: 177px; }

/* windows taskbar */
.task { height: 72px; flex: none; background: #202020; border-top: 2px solid #444; color: #fff; font-size: 16.500px; display: grid; align-items: center; padding-left: 29px; grid-template-columns: 47px 390px 55px 348px 51px 66px 66px 66px 66px 66px 66px 66px 101px 45px 51px 62px 36px 36px 50px 104px 30px; }
.task em { position: absolute; }
.wx { position: relative; height: 38px; margin-top: -6px; }
.wx em { left: 17px; top: -4px; width: 24px; height: 24px; border-radius: 50%; background: #ff98a2; color: #111; text-align: center; line-height: 24px; font-size: 16px; }
.wt, .lang, .time { display: grid; grid-template-rows: 24.500px 24.500px; line-height: 24.500px; margin-top: -4px; }
.dim { color: #ccc; }
.find { width: 330px; height: 48px; border-radius: 24px; background: #404040; border: 2px solid #505050; display: grid; grid-template-columns: 38px 199px 68px; align-items: center; padding-left: 16px; color: #ddd; font-size: 18.800px; margin-top: -2px; letter-spacing: .2px; }
.ti { position: relative; width: 54px; height: 60px; display: grid; place-items: center; margin-left: 6px; top: -1px; }
.big { background: #2b2b2b; border: 1px solid #383838; border-radius: 6px; box-shadow: 5px 0 0 -1px #333; width: 56px; margin-left: 3px; }
.cur::after { content: ""; position: absolute; left: 16px; bottom: 0; width: 24px; height: 5px; border-radius: 3px; background: #4cc2ff; }
.run::after { content: ""; position: absolute; left: 23px; bottom: 1px; width: 9px; height: 5px; border-radius: 3px; background: #999; }
.om2, .tb { border-radius: 50%; font-size: 13px; text-align: center; font-weight: 600; }
.om2 { left: 31px; top: 5px; width: 23px; height: 23px; line-height: 22px; background: #ab47bc; color: #f3dff6; }
.tb { left: 29px; top: 4px; width: 24px; height: 24px; line-height: 24px; background: #5c6bc0; color: #dfe2f6; }
.b32 { left: 25px; top: 4px; width: 31px; height: 24px; border-radius: 12px; background: #4cc2ff; color: #111; font-size: 16px; line-height: 24px; text-align: center; }
.hp { width: 36px; height: 36px; border-radius: 2px; background: #0096d6; display: flex; align-items: center; justify-content: center; }
.hp small { font-size: 11px; letter-spacing: -.7px; }
.hp b { font: italic 700 17px "Roboto", sans-serif; letter-spacing: -1px; }
.help { width: 36px; height: 36px; border-radius: 50%; background: #0096d6; border: 2px solid #fff; font-size: 30px; font-weight: 800; line-height: 31px; text-align: center; }
.dot { left: 29px; top: 4px; width: 24px; height: 24px; border-radius: 50%; background: #ffc20e; }
.word { position: absolute; left: 9px; top: 21px; width: 18px; line-height: 18px; text-align: center; font-size: 12.500px; font-weight: 800; }
.lang { text-align: center; width: 36px; margin-left: -1px; }
.time { text-align: right; width: 100px; justify-self: end; margin-right: 11px; letter-spacing: .6px; }
.task .m { position: relative; top: -1px; }
```
